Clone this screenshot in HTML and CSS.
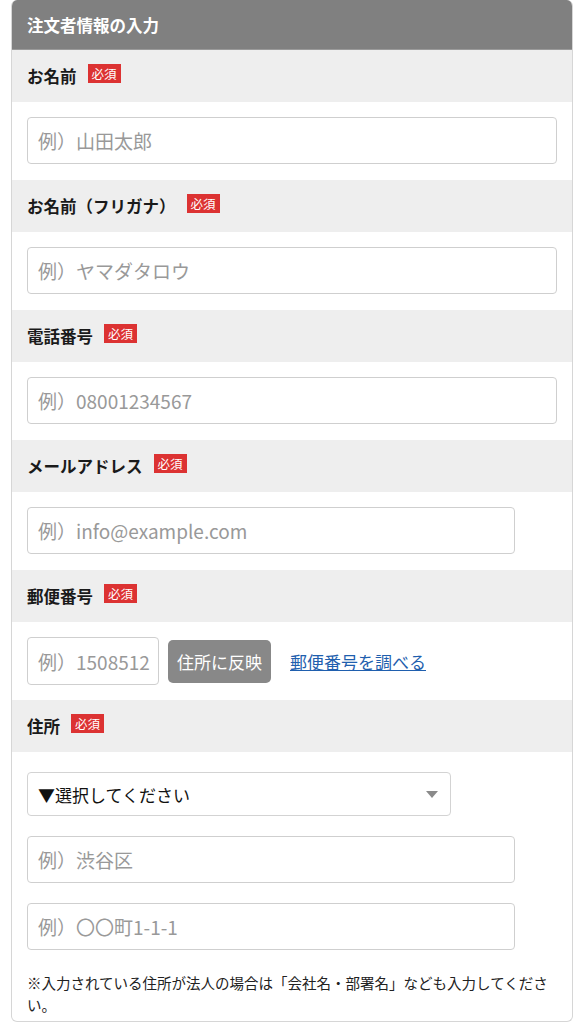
FILE: index.html
```html
<!DOCTYPE html>
<html lang="ja">
<head>
<meta charset="utf-8">
<title>注文者情報の入力</title>
<link rel="stylesheet" href="styles.css">
</head>
<body>
<div class="panel">
  <div class="panel-head">注文者情報の入力</div>

  <div class="label-row"><span class="label">お名前</span><span class="badge">必須</span></div>
  <div class="field-row"><div class="input full"><span class="ph">例）山田太郎</span></div></div>

  <div class="label-row"><span class="label">お名前（フリガナ）</span><span class="badge">必須</span></div>
  <div class="field-row"><div class="input full"><span class="ph">例）ヤマダタロウ</span></div></div>

  <div class="label-row"><span class="label">電話番号</span><span class="badge">必須</span></div>
  <div class="field-row"><div class="input full"><span class="ph">例）08001234567</span></div></div>

  <div class="label-row"><span class="label">メールアドレス</span><span class="badge">必須</span></div>
  <div class="field-row"><div class="input wide"><span class="ph">例）info@example.com</span></div></div>

  <div class="label-row"><span class="label">郵便番号</span><span class="badge">必須</span></div>
  <div class="field-row zip-row">
    <div class="input zip"><span class="ph">例）1508512</span></div>
    <div class="btn">住所に反映</div>
    <a class="link" href="#">郵便番号を調べる</a>
  </div>

  <div class="label-row"><span class="label">住所</span><span class="badge">必須</span></div>
  <div class="address">
    <div class="select"><span>▼選択してください</span><span class="caret"></span></div>
    <div class="input wide"><span class="ph">例）渋谷区</span></div>
    <div class="input wide"><span class="ph">例）〇〇町1-1-1</span></div>
    <p class="note">※入力されている住所が法人の場合は「会社名・部署名」なども入力してください。</p>
  </div>
</div>
</body>
</html>
```

FILE: styles.css
```css
* { box-sizing: border-box; }
body {
  margin: 0;
  background: #fff;
  font-family: "Noto Sans CJK JP", "Noto Sans", sans-serif;
  color: #222;
}
.panel {
  width: 562px;
  margin-left: 11px;
  border: 1px solid #d6d6d6;
  border-top: none;
  border-radius: 6px;
  overflow: hidden;
}
.panel-head {
  height: 50px;
  background: #808080;
  color: #fff;
  font-weight: bold;
  font-size: 16.5px;
  display: flex;
  align-items: center;
  padding: 0 15px;
  border-bottom: 1px solid #9a9a9a;
}
.label-row {
  height: 52px;
  background: #eeeeee;
  display: flex;
  align-items: center;
  padding: 0 15px;
  gap: 11px;
}
.label {
  font-size: 16.5px;
  font-weight: bold;
  color: #1a1a1a;
}
.badge {
  background: #dc3232;
  color: #fff;
  font-size: 12.5px;
  line-height: 19px;
  height: 19px;
  padding: 0 4px;
  margin-top: -5px;
}
.field-row {
  padding: 15px 15px 16px;
  display: flex;
  align-items: center;
}
.input {
  height: 47px;
  border: 1px solid #cfcfcf;
  border-radius: 4px;
  display: flex;
  align-items: center;
  padding: 0 10px;
  background: #fff;
}
.ph {
  font-size: 19px;
  color: #999;
  white-space: nowrap;
}
.full { width: 530px; }
.wide { width: 488px; }
.zip-row { padding: 15px 15px 15px; }
.zip { width: 132px; height: 48px; overflow: hidden; }
.btn {
  margin-left: 9px;
  width: 103px;
  height: 43px;
  border-radius: 5px;
  background: #888;
  color: #fff;
  font-size: 17px;
  display: flex;
  align-items: center;
  justify-content: center;
}
.link {
  margin-left: 19px;
  font-size: 17px;
  color: #1f5fae;
  text-decoration: underline;
}
.address {
  padding: 20px 15px 0;
  display: flex;
  flex-direction: column;
  gap: 20px;
}
.select {
  width: 424px;
  height: 44px;
  border: 1px solid #d3d3d3;
  border-radius: 4px;
  display: flex;
  align-items: center;
  justify-content: space-between;
  padding: 0 12px 0 10px;
  font-size: 17px;
  color: #111;
}
.caret {
  width: 0;
  height: 0;
  border-left: 6px solid transparent;
  border-right: 6px solid transparent;
  border-top: 7px solid #8a8a8a;
}
.note {
  margin: 2px 0 5px;
  font-size: 14.5px;
  line-height: 22px;
  color: #222;
}
```
